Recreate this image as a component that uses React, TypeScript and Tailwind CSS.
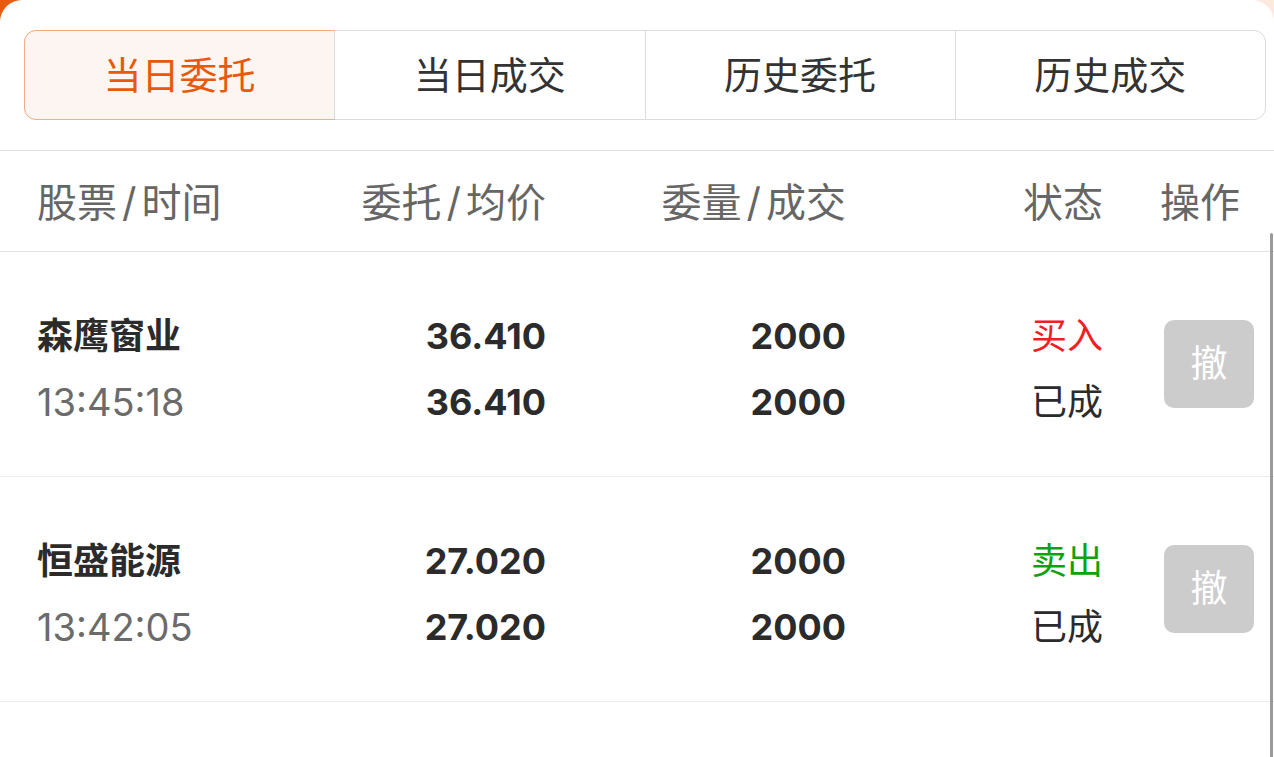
import React from 'react';

const tabs = ['当日委托', '当日成交', '历史委托', '历史成交'];

const orders = [
  { name: '森鹰窗业', time: '13:45:18', price: '36.410', avg: '36.410', qty: '2000', done: '2000', side: '买入', buy: true, status: '已成' },
  { name: '恒盛能源', time: '13:42:05', price: '27.020', avg: '27.020', qty: '2000', done: '2000', side: '卖出', buy: false, status: '已成' },
];

const font = { fontFamily: '"Inter", "Noto Sans CJK SC", sans-serif' };

function Pair({ a, b }: { a: string; b: string }) {
  return (
    <>
      {a}
      <span className="mx-[5px]">/</span>
      {b}
    </>
  );
}

export default function App() {
  return (
    <div className="w-[1274px] h-[757px] bg-gradient-to-r from-[#e8590c] via-[#fde3d3] to-[#fde9dd] overflow-hidden" style={font}>
      <div className="relative h-full bg-white rounded-t-[22px]">
        {/* tabs */}
        <div className="pl-[24px] pr-[8px] pt-[30px] pb-[30px] border-b border-[#e3e3e6]">
          <div className="flex h-[90px] rounded-[12px] border border-[#dcdce0]">
            {tabs.map((t, i) => (
              <div
                key={t}
                className={
                  i === 0
                    ? 'flex-1 flex items-center justify-center text-[38px] text-[#e8590c] bg-[#fdf5f1] border border-[#f5ac86] -m-px rounded-l-[12px]'
                    : 'flex-1 flex items-center justify-center text-[38px] text-[#333] border-l border-[#dcdce0]'
                }
              >
                {t}
              </div>
            ))}
          </div>
        </div>

        {/* header */}
        <div className="grid grid-cols-[263px_246px_300px_257px_1fr] pl-[37px] pt-[4px] h-[101px] items-center text-[40px] text-[#666] border-b border-[#e3e3e6]">
          <div><Pair a="股票" b="时间" /></div>
          <div className="text-right"><Pair a="委托" b="均价" /></div>
          <div className="text-right"><Pair a="委量" b="成交" /></div>
          <div className="text-right">状态</div>
          <div className="pl-[57px]">操作</div>
        </div>

        {/* rows */}
        {orders.map((o) => (
          <div
            key={o.name}
            className="grid grid-cols-[263px_246px_300px_257px_1fr] pl-[37px] h-[225px] items-center border-b border-[#ececec]"
          >
            <div className="flex flex-col gap-[18px] pt-[9px]">
              <div className="text-[36px] leading-[48px] font-bold text-[#2b2b2b]">{o.name}</div>
              <div className="text-[38px] leading-[48px] text-[#6b6b6b]">{o.time}</div>
            </div>
            <div className="flex flex-col gap-[18px] pt-[9px] text-right text-[36px] leading-[48px] font-bold text-[#2b2b2b]">
              <div>{o.price}</div>
              <div>{o.avg}</div>
            </div>
            <div className="flex flex-col gap-[18px] pt-[9px] text-right text-[36px] leading-[48px] font-bold text-[#2b2b2b]">
              <div>{o.qty}</div>
              <div>{o.done}</div>
            </div>
            <div className="flex flex-col gap-[18px] pt-[9px] text-right text-[36px] leading-[48px]">
              <div className={o.buy ? 'text-[#f0201f]' : 'text-[#0aa30a]'}>{o.side}</div>
              <div className="text-[#2b2b2b]">{o.status}</div>
            </div>
            <div className="pl-[61px]">
              <div className="w-[90px] h-[88px] rounded-[10px] bg-[#cccccc] flex items-center justify-center text-[37px] text-white">
                撤
              </div>
            </div>
          </div>
        ))}

        {/* scroll indicator */}
        <div className="absolute right-[1px] top-[233px] bottom-0 w-[3px] bg-[#9a9a9a] rounded-t-[2px]" />
      </div>
    </div>
  );
}
